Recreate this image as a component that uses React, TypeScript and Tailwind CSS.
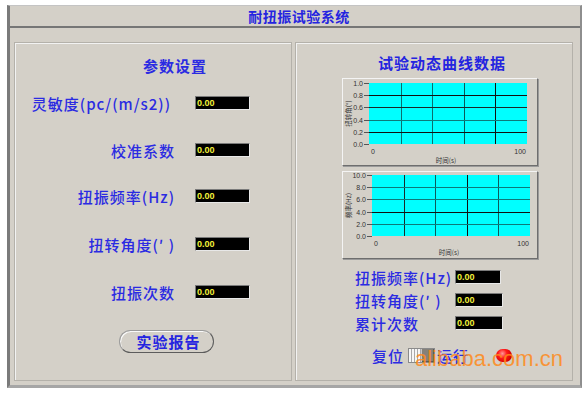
import React from "react";

const CJK = "font-['Noto_Sans_CJK_SC',sans-serif]";

type ChartProps = {
  labels: string[];
  yTitle: string;
  plotX: number;
  plotY: number;
  vColors: string[];
  hColors: string[];
};

function Chart({ labels, yTitle, plotX, plotY, vColors, hColors }: ChartProps) {
  const w = 158;
  const h = 61;
  return (
    <div className="w-[196px] h-[88px] border border-t-[#f4f4f4] border-l-[#f4f4f4] border-r-[#6e6e6e] border-b-[#6e6e6e] bg-[#d4d0c8] shadow-[1px_1px_0_#9a9a9a]">
      <svg width="194" height="86" className="block">
        <rect x={plotX} y={plotY} width={w} height={h} fill="#00ffff" />
        {vColors.map((c, i) => {
          const x = Math.round(plotX + (w * (i + 1)) / 5) + 0.5;
          return <line key={"v" + i} x1={x} x2={x} y1={plotY} y2={plotY + h} stroke={c} strokeWidth={1} />;
        })}
        {hColors.map((c, i) => {
          const y = Math.round(plotY + (h * (i + 1)) / 5) + 0.5;
          return <line key={"h" + i} x1={plotX} x2={plotX + w} y1={y} y2={y} stroke={c} strokeWidth={1} />;
        })}
        {labels.map((l, i) => {
          const y = Math.round(plotY + (h * i) / 5) + 0.5;
          return (
            <g key={l}>
              <line x1={plotX - 5} x2={plotX} y1={y} y2={y} stroke="#555" strokeWidth={1} />
              <text x={plotX - 6} y={y + 2.5} fontSize="7" textAnchor="end" fill="#333" fontFamily="Liberation Sans, sans-serif">
                {l}
              </text>
            </g>
          );
        })}
        <text x={plotX + 2} y={plotY + h + 10} fontSize="7" fill="#333" fontFamily="Liberation Sans, sans-serif">
          0
        </text>
        <text x={plotX + w - 1} y={plotY + h + 10} fontSize="7" textAnchor="end" fill="#333" fontFamily="Liberation Sans, sans-serif">
          100
        </text>
        <text x={plotX + w / 2 - 2} y={plotY + h + 19} fontSize="6.5" textAnchor="middle" fill="#333" fontFamily="Noto Sans CJK SC, sans-serif">
          时间(s)
        </text>
        <text
          x={0}
          y={0}
          fontSize="6.5"
          textAnchor="middle"
          fill="#333"
          fontFamily="Noto Sans CJK SC, sans-serif"
          transform={`translate(8 ${plotY + h / 2}) rotate(-90)`}
        >
          {yTitle}
        </text>
      </svg>
    </div>
  );
}

function Value({ width }: { width: string }) {
  return (
    <div
      className={`${width} h-[14px] bg-black border border-t-[#7a7a7a] border-l-[#7a7a7a] border-r-[#e8e8e8] border-b-[#e8e8e8] flex items-center pl-[1px] font-['Liberation_Sans',sans-serif] text-[9px] font-bold text-[#f2f23a] leading-none`}
    >
      0.00
    </div>
  );
}

function ParamRow({ label, mt, pr }: { label: string; mt: string; pr?: string }) {
  return (
    <div className={`flex items-center h-[16px] ${mt}`}>
      <div className={`w-[160px] flex justify-end ${pr ?? ""} ${CJK} font-medium text-[15px] tracking-[1px] text-[#2b2be2] leading-none whitespace-nowrap`}>
        {label}
      </div>
      <div className="ml-5">
        <Value width="w-[55px]" />
      </div>
    </div>
  );
}

function DataRow({ label, mt, width }: { label: string; mt: string; width: string }) {
  return (
    <div className={`flex items-center h-[16px] ${mt} ml-[59px]`}>
      <div className={`w-[100px] ${CJK} font-medium text-[15px] tracking-[1px] text-[#2b2be2] leading-none whitespace-nowrap`}>{label}</div>
      <Value width={width} />
    </div>
  );
}

export default function App() {
  return (
    <div className="w-[588px] h-[394px] bg-white pl-[7px] pt-[5px]">
      <div className="relative w-[575px] h-[383px] bg-[#d4d0c8] border-l-[3px] border-l-[#7a7a7a] border-t border-t-[#c4c4c4] border-r-2 border-r-[#8e8e8e] border-b-[3px] border-b-[#a6a6a6] flex flex-col">
        <div className="h-[22px] border-b-2 border-b-[#767676] flex items-center justify-center">
          <span className={`${CJK} font-bold text-[14px] tracking-[0.5px] text-[#2424e0] leading-none pl-[8px]`}>耐扭振试验系统</span>
        </div>
        <div className="flex gap-[3px] pl-[4px] pt-[14px]">
          {/* 参数设置 */}
          <div className="w-[278px] h-[339px] border border-[#b4b1aa] shadow-[inset_1px_1px_0_#f2f2f2] flex flex-col">
            <div className={`mt-[12px] ml-[128px] h-[20px] flex items-center ${CJK} font-bold text-[15px] tracking-[1px] text-[#2b2be2] leading-none`}>
              参数设置
            </div>
            <ParamRow label="灵敏度(pc/(m/s2))" mt="mt-[20px]" pr="pr-[4px]" />
            <ParamRow label="校准系数" mt="mt-[31px]" />
            <ParamRow label="扭振频率(Hz)" mt="mt-[30px]" />
            <ParamRow label="扭转角度(′ )" mt="mt-[32px]" />
            <ParamRow label="扭振次数" mt="mt-[32px]" />
            <div className="mt-[30px] ml-[104px] w-[95px] h-[23px] rounded-full border border-[#9c9c9c] border-r-[#5c5c5c] border-b-[#5c5c5c] shadow-[inset_1px_1px_0_#fafafa] flex items-center justify-center">
              <span className={`${CJK} font-bold text-[15px] tracking-[1px] text-[#2424e0] leading-none pl-[4px]`}>实验报告</span>
            </div>
          </div>
          {/* 试验动态曲线数据 */}
          <div className="w-[278px] h-[339px] border border-[#b4b1aa] shadow-[inset_1px_1px_0_#f2f2f2] flex flex-col">
            <div className={`mt-[9px] ml-[82px] h-[20px] flex items-center ${CJK} font-bold text-[15px] tracking-[1px] text-[#2424e0] leading-none`}>
              试验动态曲线数据
            </div>
            <div className="mt-[6px] ml-[46px]">
              <Chart
                labels={["1.0", "0.8", "0.6", "0.4", "0.2", "0.0"]}
                yTitle="扭转角(°)"
                plotX={26}
                plotY={4}
                vColors={["#0d6e6e", "#0d6e6e", "#0a5a5a", "#111"]}
                hColors={["#111", "#1a2a2a", "#0d7a7a", "#111"]}
              />
            </div>
            <div className="mt-[5px] ml-[46px]">
              <Chart
                labels={["10.0", "8.0", "6.0", "4.0", "2.0", "0.0"]}
                yTitle="频率(Hz)"
                plotX={29}
                plotY={3}
                vColors={["#1a2a2a", "#0d5a5a", "#111", "#0d5a5a"]}
                hColors={["#0d7a7a", "#0d7a7a", "#111", "#0d7a7a"]}
              />
            </div>
            <DataRow label="扭振频率(Hz)" mt="mt-[10px]" width="w-[46px]" />
            <DataRow label="扭转角度(′ )" mt="mt-[7px]" width="w-[48px]" />
            <DataRow label="累计次数" mt="mt-[7px]" width="w-[48px]" />
            <div className="mt-[15px] ml-[76px] h-[18px] flex items-center">
              <span className={`${CJK} font-medium text-[15px] tracking-[1px] text-[#2b2be2] leading-none`}>复位</span>
              <div className="ml-[4px] w-[27px] h-[15px] flex border border-[#8a8a8a]">
                <div className="w-[12px] h-full bg-[repeating-linear-gradient(90deg,#f6f6f6_0_2px,#a8a8a8_2px_3px)]" />
                <div className="flex-1 h-full bg-[#858078] border-l border-l-[#c8c8c8] shadow-[inset_-1px_-1px_0_#5a5a5a]" />
              </div>
              <span className={`ml-[2px] ${CJK} font-medium text-[15px] tracking-[1px] text-[#2b2be2] leading-none`}>运行</span>
              <div className="ml-[27px] w-[16px] h-[13px] rounded-full bg-[radial-gradient(circle_at_40%_35%,#ff9a9a_0,#ff1a1a_35%,#d00000_75%,#900000_100%)]" />
            </div>
          </div>
        </div>
        <div className="absolute left-[405px] top-[342px] font-['Liberation_Sans',sans-serif] text-[22px] leading-none text-[#ff8a1c] opacity-85 pointer-events-none">
          alibaba.com.cn
        </div>
      </div>
    </div>
  );
}
